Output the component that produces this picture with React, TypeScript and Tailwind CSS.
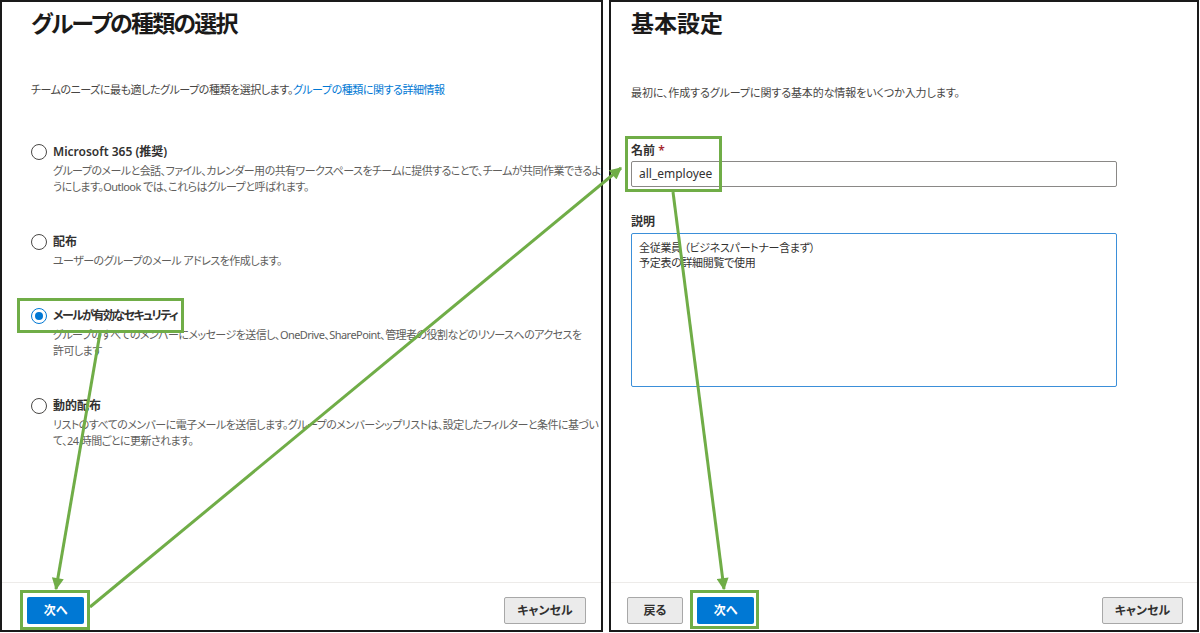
import React from "react";

const FONT =
  "font-['Noto_Sans','Noto_Sans_CJK_JP',sans-serif] [font-feature-settings:'palt']";

function Radio({ checked }: { checked?: boolean }) {
  if (checked) {
    return (
      <span className="w-[16px] h-[16px] rounded-full border border-[#0078d4] flex items-center justify-center shrink-0 box-border">
        <span className="w-[8px] h-[8px] rounded-full bg-[#0078d4]" />
      </span>
    );
  }
  return (
    <span className="w-[16px] h-[16px] rounded-full border-[1.5px] border-[#4a4846] shrink-0 box-border" />
  );
}

function Option({
  label,
  lines,
  checked,
  className,
  labelClass,
}: {
  label: string;
  lines: string[];
  checked?: boolean;
  className?: string;
  labelClass?: string;
}) {
  return (
    <div className={className}>
      <div className="flex items-center h-[22px] gap-[6px]">
        <Radio checked={checked} />
        <span
          className={
            "text-[12px] font-semibold text-[#323130] whitespace-nowrap " + (labelClass || "")
          }
        >
          {label}
        </span>
      </div>
      <div className="pl-[22px] text-[11px] tracking-[-0.55px] leading-[16px] text-[#605e5c]">
        {lines.map((l, i) => (
          <div key={i} className="whitespace-nowrap">
            {l}
          </div>
        ))}
      </div>
    </div>
  );
}

function PrimaryButton({ children, className }: { children: React.ReactNode; className?: string }) {
  return (
    <div
      className={
        "w-[57px] h-[27px] bg-[#0078d4] text-white text-[12px] font-semibold rounded-[2px] flex items-center justify-center " +
        (className || "")
      }
    >
      {children}
    </div>
  );
}

function DefaultButton({ children, className }: { children: React.ReactNode; className?: string }) {
  return (
    <div
      className={
        "h-[27px] bg-[#ebebeb] border border-[#a8a8a8] text-[#323130] text-[12px] font-semibold rounded-[2px] flex items-center justify-center box-border " +
        (className || "")
      }
    >
      {children}
    </div>
  );
}

function Overlay() {
  const g = "#70ad47";
  return (
    <svg
      className="absolute left-0 top-0 pointer-events-none"
      width={1200}
      height={633}
      viewBox="0 0 1200 633"
    >
      <defs>
        <marker
          id="ah"
          viewBox="0 0 10 10"
          refX="9"
          refY="5"
          markerUnits="userSpaceOnUse"
          markerWidth="14"
          markerHeight="12"
          orient="auto"
        >
          <path d="M0,0 L10,5 L0,10 z" fill={g} />
        </marker>
      </defs>
      <rect x={18.5} y={299.5} width={164} height={32} fill="none" stroke={g} strokeWidth={3} />
      <rect x={21.5} y={591.5} width={67} height={37} fill="none" stroke={g} strokeWidth={3} />
      <rect x={626.5} y={137.5} width={94} height={53} fill="none" stroke={g} strokeWidth={3} />
      <rect x={691.5} y={591.5} width={66} height={36} fill="none" stroke={g} strokeWidth={3} />
      <line x1={100} y1={333} x2={56} y2={589} stroke={g} strokeWidth={3} markerEnd="url(#ah)" />
      <line x1={90} y1={607} x2={621} y2={168} stroke={g} strokeWidth={3} markerEnd="url(#ah)" />
      <line x1={673} y1={192} x2={724} y2={589} stroke={g} strokeWidth={3} markerEnd="url(#ah)" />
    </svg>
  );
}

export default function App() {
  return (
    <div className={"relative w-[1200px] h-[633px] bg-white flex gap-[6px] overflow-hidden " + FONT}>
      {/* Left panel */}
      <div className="w-[603px] h-[632px] border-2 border-[#1a1a1a] flex flex-col shrink-0 box-border">
        <div className="flex-1 pl-[29px] pr-[10px]">
          <h1 className="mt-[6px] text-[23px] leading-[30px] tracking-[-1.8px] font-semibold text-[#1b1a19] whitespace-nowrap">
            グループの種類の選択
          </h1>
          <p className="mt-[44px] text-[11px] tracking-[-0.45px] leading-[16px] text-[#484644] whitespace-nowrap">
            チームのニーズに最も適したグループの種類を選択します。
            <span className="text-[#0078d4]">グループの種類に関する詳細情報</span>
          </p>
          <Option
            className="mt-[43px]"
            label="Microsoft 365 (推奨)"
            lines={[
              "グループのメールと会話、ファイル、カレンダー用の共有ワークスペースをチームに提供することで、チームが共同作業できるよ",
              "うにします。Outlook では、これらはグループと呼ばれます。",
            ]}
          />
          <Option
            className="mt-[36px]"
            label="配布"
            lines={["ユーザーのグループのメール アドレスを作成します。"]}
          />
          <Option
            className="mt-[36px]"
            label="メールが有効なセキュリティ"
            labelClass="tracking-[-1.6px]"
            checked
            lines={[
              "グループのすべてのメンバーにメッセージを送信し、OneDrive、SharePoint、管理者の役割などのリソースへのアクセスを",
              "許可します",
            ]}
          />
          <Option
            className="mt-[36px]"
            label="動的配布"
            lines={[
              "リストのすべてのメンバーに電子メールを送信します。グループのメンバーシップリストは、設定したフィルターと条件に基づい",
              "て、24 時間ごとに更新されます。",
            ]}
          />
        </div>
        <div className="h-[48px] border-t border-[#edebe9] flex items-start justify-between pt-[14px] pl-[25px] pr-[15px] box-border">
          <PrimaryButton>次へ</PrimaryButton>
          <DefaultButton className="w-[82px]">キャンセル</DefaultButton>
        </div>
      </div>

      {/* Right panel */}
      <div className="w-[590px] h-[632px] border-2 border-[#1a1a1a] flex flex-col shrink-0 box-border">
        <div className="flex-1 pl-[20px]">
          <h1 className="mt-[6px] text-[23px] leading-[30px] font-semibold text-[#1b1a19] whitespace-nowrap">
            基本設定
          </h1>
          <p className="mt-[47px] text-[11px] tracking-[-0.1px] leading-[16px] text-[#484644] whitespace-nowrap">
            最初に、作成するグループに関する基本的な情報をいくつか入力します。
          </p>
          <div className="mt-[42px] text-[12px] leading-[16px] font-semibold text-[#323130]">
            名前 <span className="text-[#a4262c]">*</span>
          </div>
          <div className="mt-[2px] w-[486px] h-[26px] border border-[#8a8886] rounded-[2px] px-[7px] flex items-center text-[12px] text-[#323130] box-border">
            all_employee
          </div>
          <div className="mt-[27px] text-[12px] leading-[16px] font-semibold text-[#323130]">
            説明
          </div>
          <div className="mt-[3px] w-[486px] h-[154px] border border-[#3b8fd9] rounded-[2px] px-[7px] pt-[6px] text-[11px] tracking-[-0.3px] leading-[15px] text-[#323130] box-border">
            <div className="whitespace-nowrap">全従業員 （ビジネスパートナー含まず）</div>
            <div className="whitespace-nowrap">予定表の詳細閲覧で使用</div>
          </div>
        </div>
        <div className="h-[48px] border-t border-[#edebe9] flex items-start pt-[14px] pl-[16px] pr-[14px] box-border">
          <DefaultButton className="w-[56px]">戻る</DefaultButton>
          <PrimaryButton className="ml-[14px]">次へ</PrimaryButton>
          <DefaultButton className="w-[81px] ml-auto">キャンセル</DefaultButton>
        </div>
      </div>

      <Overlay />
    </div>
  );
}
